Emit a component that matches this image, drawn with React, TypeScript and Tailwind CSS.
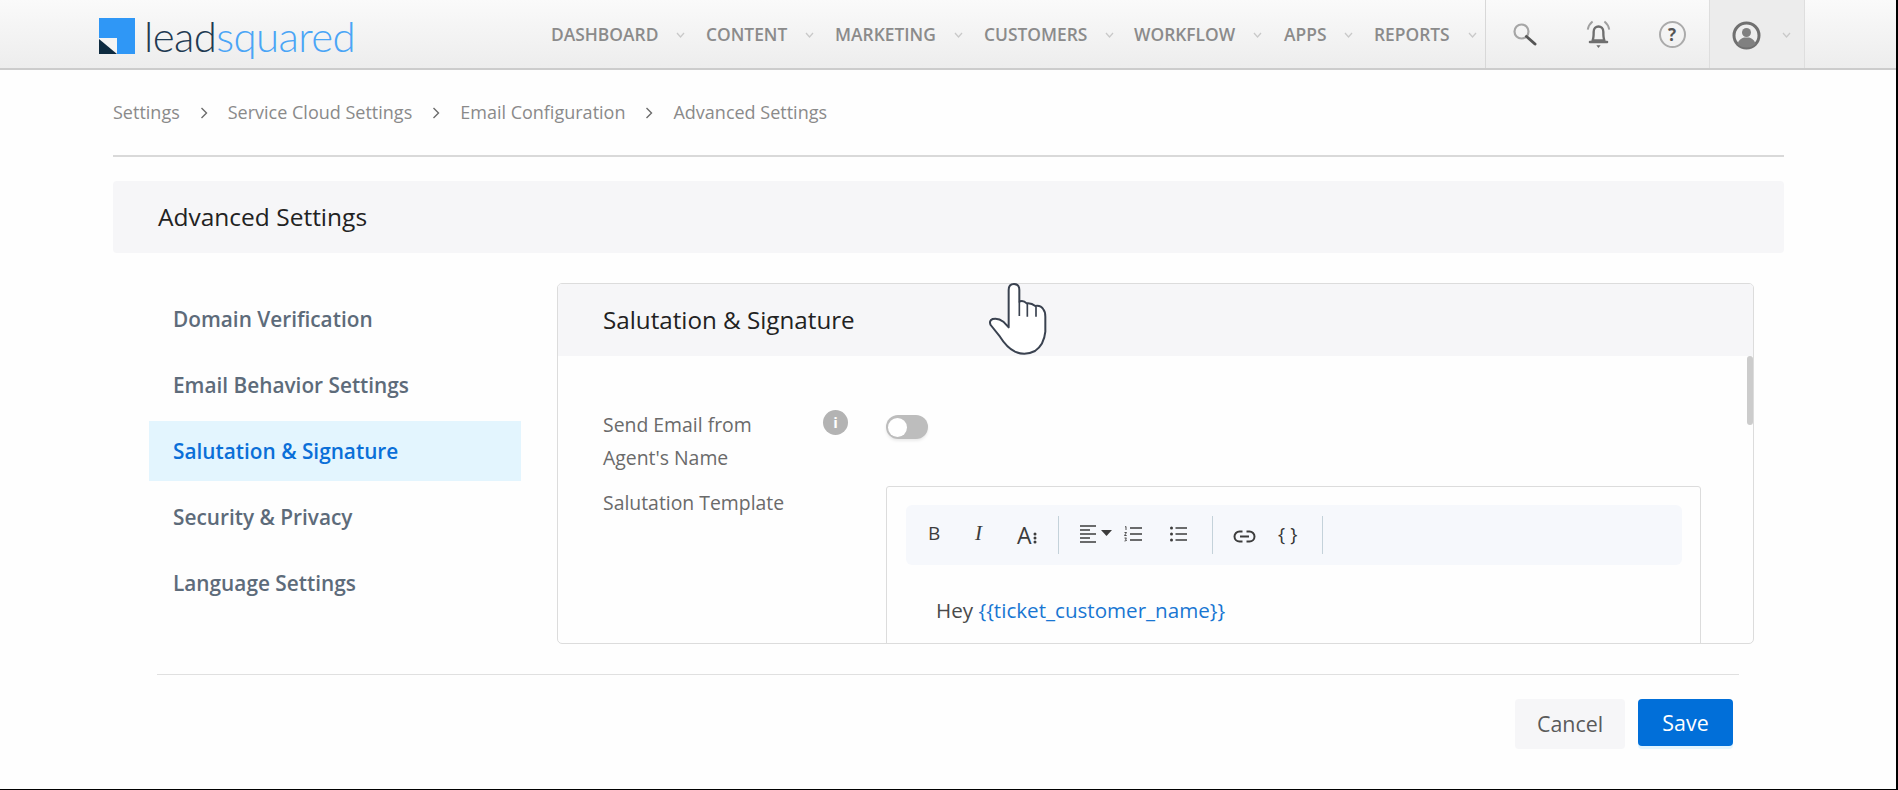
import React from 'react'

const navItems = [
  { label: 'DASHBOARD', width: 'w-[155px]' },
  { label: 'CONTENT', width: 'w-[129px]' },
  { label: 'MARKETING', width: 'w-[149px]' },
  { label: 'CUSTOMERS', width: 'w-[150px]' },
  { label: 'WORKFLOW', width: 'w-[150px]' },
  { label: 'APPS', width: 'w-[90px]' },
  { label: 'REPORTS', width: 'w-[111px]' },
]

const crumbs = ['Service Cloud Settings', 'Email Configuration', 'Advanced Settings']

const sideItems = ['Domain Verification', 'Email Behavior Settings', 'Salutation & Signature', 'Security & Privacy', 'Language Settings']

function Chevron({ className = '' }: { className?: string }) {
  return (
    <svg width="9" height="6" viewBox="0 0 9 6" fill="none" className={className}>
      <path d="M1 1l3.5 4L8 1" stroke="#c9c9c9" strokeWidth="1.3" />
    </svg>
  )
}

function CrumbArrow() {
  return (
    <svg width="8" height="12" viewBox="0 0 8 12" fill="none" className="mx-[20px]">
      <path d="M1.5 1l5 5-5 5" stroke="#6b6b6b" strokeWidth="1.4" />
    </svg>
  )
}

function Logo() {
  return (
    <div className="mt-[3px] ml-[99px] flex w-[452px] shrink-0 items-center">
      <svg width="36" height="36" viewBox="0 0 36 36">
        <rect width="36" height="36" fill="#2f97f6" />
        <rect y="20" width="18" height="16" fill="#f4f4f4" />
        <polygon points="0,21 18,36 0,36" fill="#0e2b40" />
      </svg>
      <div className="ml-[9px] text-[42px] leading-none font-light tracking-[-0.6px] font-['Lato',sans-serif]">
        <span className="text-[#1f3a52]">lead</span>
        <span className="text-[#4aa5f6]">squared</span>
      </div>
    </div>
  )
}

function HeaderIcons() {
  return (
    <div className="flex h-full items-center border-l border-[#d8d8d8]">
      <div className="flex w-[76px] justify-center">
        <svg width="25" height="25" viewBox="0 0 25 25" fill="none">
          <circle cx="9.5" cy="9.5" r="7" stroke="#a6a6a6" strokeWidth="2.2" />
          <path d="M14.5 14.5L23 22" stroke="#555" strokeWidth="3" strokeLinecap="round" />
        </svg>
      </div>
      <div className="flex w-[73px] justify-center">
        <svg width="27" height="29" viewBox="0 0 25 27" fill="none">
          <path d="M7 19c1-2 1-4 1-8 0-3 2-5 4.500-5s4.500 2 4.500 5c0 4 0 6 1 8z" stroke="#6f6f6f" strokeWidth="2.2" strokeLinejoin="round" />
          <path d="M4.500 20.500h16" stroke="#6f6f6f" strokeWidth="2.2" strokeLinecap="round" />
          <path d="M10.500 23.500h4l-2 2.500z" fill="#6f6f6f" />
          <path d="M7 1.500C4.500 3.500 3 6 2.500 9M18 1.500c2.500 2 4 4.500 4.500 7.500" stroke="#a0a0a0" strokeWidth="1.8" />
        </svg>
      </div>
      <div className="flex w-[74px] justify-center">
        <div className="flex h-[27px] w-[27px] items-center justify-center rounded-full border-2 border-[#ababab] text-[17px] leading-none font-bold text-[#555]">?</div>
      </div>
      <div className="flex h-full w-[96px] items-center border-x border-[#dedede] bg-[#ececec] pl-[22px]">
        <svg width="29" height="29" viewBox="0 0 29 29" fill="none" className="mt-[2px]">
          <circle cx="14.500" cy="14.500" r="12.500" fill="#eeeeee" stroke="#707070" strokeWidth="3" />
          <circle cx="14.500" cy="11.500" r="4.500" fill="#808080" />
          <path d="M5.500 23c1-4 4-6 6.500-6.500h5c2.500.5 5.500 2.500 6.500 6.500-2.500 2.500-5.500 3.500-9 3.500s-6.500-1-9-3.500z" fill="#808080" />
        </svg>
        <Chevron className="mt-[2px] ml-[21px]" />
      </div>
    </div>
  )
}

function Toolbar() {
  return (
    <div className="mt-[18px] mr-[18px] ml-[19px] flex h-[60px] items-center rounded-[6px] bg-[#f6f8fc] text-[#3c3c3c]">
      <span className="-mt-[3px] ml-[22px] w-[12px] text-[19px] leading-none font-medium">B</span>
      <span className="-mt-[3px] ml-[35px] w-[10px] text-[21px] leading-none italic font-['Liberation_Serif',serif]">I</span>
      <div className="ml-[32px] flex w-[20px] items-end">
        <span className="text-[23px] leading-none font-medium">A</span>
        <svg width="4" height="12" viewBox="0 0 4 12" className="mb-[3px] ml-[1px] shrink-0">
          <circle cx="2" cy="2" r="1.500" fill="#3c3c3c" />
          <circle cx="2" cy="6" r="1.500" fill="#3c3c3c" />
          <circle cx="2" cy="10" r="1.500" fill="#3c3c3c" />
        </svg>
      </div>
      <div className="ml-[21px] h-[38px] w-px bg-[#c4d2da]" />
      <svg width="32" height="18" viewBox="0 0 32 18" className="-mt-[2px] ml-[21px]" fill="none">
        <path d="M0 1h16M0 5h10M0 9h16M0 13h10M0 17h16" stroke="#3c3c3c" strokeWidth="1.400" />
        <path d="M21 5h11l-5.500 6z" fill="#3c3c3c" />
      </svg>
      <svg width="18" height="16" viewBox="0 0 18 16" className="-mt-[2px] ml-[12px]" fill="none">
        <path d="M6 2h12M6 8h12M6 14h12" stroke="#3c3c3c" strokeWidth="1.400" />
        <path d="M1 1l1-.5V4M0.500 6.500h2L.5 9.500h2.200M.5 12h2l-1 1 1 1.500-2 .5" stroke="#3c3c3c" strokeWidth=".9" />
      </svg>
      <svg width="17" height="16" viewBox="0 0 17 16" className="-mt-[2px] ml-[28px]" fill="none">
        <path d="M5.500 2h11.500M5.500 8h11.500M5.500 14h11.500" stroke="#3c3c3c" strokeWidth="1.400" />
        <circle cx="1.500" cy="2" r="1.500" fill="#3c3c3c" />
        <circle cx="1.500" cy="8" r="1.500" fill="#3c3c3c" />
        <circle cx="1.500" cy="14" r="1.500" fill="#3c3c3c" />
      </svg>
      <div className="ml-[25px] h-[38px] w-px bg-[#c4d2da]" />
      <svg width="23" height="13" viewBox="0 0 23 13" className="mt-[3px] ml-[20px]" fill="none">
        <path d="M9.500 1.500H6.500a5 5 0 000 10h3M13.500 1.500h3a5 5 0 010 10h-3M7 6.500h9" stroke="#3c3c3c" strokeWidth="2" />
      </svg>
      <span className="-mt-[2px] ml-[22px] w-[19px] text-[19px] leading-none tracking-[5px] whitespace-nowrap text-[#333]">{'{}'}</span>
      <div className="ml-[25px] h-[38px] w-px bg-[#c4d2da]" />
    </div>
  )
}

function HandCursor() {
  return (
    <svg width="120" height="100" viewBox="0 0 360 300" className="absolute top-[270px] left-[960px]" fill="none">
      <path
        d="M146 60Q146 42 162 42Q178 42 178 60L178 95Q190 90 200 100Q214 98 226 108Q242 105 250 118Q256 125 256 140L256 185Q252 225 225 243Q195 258 165 245Q140 232 120 200L92 165Q86 152 98 147Q115 143 130 155L146 172Z"
        fill="#fff"
        stroke="#3a4250"
        strokeWidth="6"
        strokeLinejoin="round"
      />
      <path d="M178 95L178 138M202 102L202 140M228 110L228 140" stroke="#3a4250" strokeWidth="5" />
    </svg>
  )
}

export default function App() {
  return (
    <div className="relative box-border h-[790px] w-[1898px] overflow-hidden border-r-2 border-b border-black bg-[#fefefe] font-['Open_Sans',sans-serif]">
      <header className="box-border flex h-[70px] items-center border-b-2 border-[#cccccc] bg-gradient-to-b from-[#fafafa] to-[#ededed]">
        <Logo />
        <nav className="mt-[2px] flex w-[934px] shrink-0 items-center">
          {navItems.map(item => (
            <div key={item.label} className={`flex items-center ${item.width}`}>
              <span className="text-[17.4px] leading-none font-semibold text-[#8b8b8b]">{item.label}</span>
              <Chevron className="ml-[18px]" />
            </div>
          ))}
        </nav>
        <HeaderIcons />
      </header>

      <div className="mr-[112px] ml-[113px] flex h-[87px] items-center border-b-2 border-[#d9d9d9] text-[18px] text-[#8a8a8a]">
        <span>Settings</span>
        {crumbs.map(c => (
          <React.Fragment key={c}>
            <CrumbArrow />
            <span>{c}</span>
          </React.Fragment>
        ))}
      </div>

      <div className="mt-[24px] mr-[112px] ml-[113px] flex h-[72px] items-center rounded-[4px] bg-[#f6f6f8] pl-[45px] text-[24.5px] text-[#222]">
        Advanced Settings
      </div>

      <div className="mt-[30px] flex pl-[149px]">
        <div className="mt-[6px] flex w-[372px] flex-col gap-[6px]">
          {sideItems.map(item => (
            <div
              key={item}
              className={`flex h-[60px] items-center pt-[2px] pl-[24px] text-[20.8px] font-semibold ${item === 'Salutation & Signature' ? 'bg-[#e3f5fe] text-[#0a6fd8]' : 'text-[#5d6b7a]'}`}
            >
              {item}
            </div>
          ))}
        </div>

        <div className="relative ml-[36px] box-border h-[361px] w-[1197px] overflow-hidden rounded-[5px] border border-[#dcdcdc]">
          <div className="flex h-[72px] items-center bg-[#f6f6f8] pl-[45px] text-[24.2px] text-[#222]">Salutation &amp; Signature</div>
          <div className="absolute top-[72px] right-0 h-[69px] w-[6px] rounded-[3px] bg-[#cccccc]" />
          <div className="flex pt-[52px] pl-[45px]">
            <div className="w-[283px] text-[19.4px] leading-[33px] text-[#6a6a6a]">
              <div className="flex">
                <div className="w-[220px]">
                  Send Email from
                  <br />
                  Agent's Name
                </div>
                <div className="mt-[2px] flex h-[25px] w-[25px] items-center justify-center rounded-full bg-[#b3b3b3] text-[15px] leading-none font-bold text-white">i</div>
              </div>
              <div className="mt-[12px]">Salutation Template</div>
            </div>
            <div className="w-[815px]">
              <div className="mt-[7px] flex h-[24px] w-[42px] items-center rounded-full bg-[#bdbdbd] pl-[2px] shadow-[0_2px_3px_rgba(0,0,0,0.08)]">
                <div className="h-[19px] w-[19px] rounded-full bg-white" />
              </div>
              <div className="mt-[47px] h-[300px] rounded-[3px] border border-[#dcdcdc]">
                <Toolbar />
                <div className="mt-[30px] pl-[49px] text-[20.6px] leading-[30px] text-[#4a4a4a]">
                  Hey <span className="text-[#1976d2]">{'{{ticket_customer_name}}'}</span>
                </div>
              </div>
            </div>
          </div>
        </div>
      </div>

      <div className="mt-[30px] mr-[157px] ml-[157px] border-t border-[#e0e0e0]" />
      <div className="mt-[24px] flex justify-end gap-[13px] pr-[163px]">
        <button className="h-[50px] w-[110px] rounded-[4px] bg-[#f6f6f8] text-[21.4px] text-[#5a5a5a]">Cancel</button>
        <button className="h-[47px] w-[95px] rounded-[4px] bg-[#016fd9] pt-[2px] text-[21.4px] text-white shadow-[0_3px_0_#e3f5fe]">Save</button>
      </div>

      <HandCursor />
    </div>
  )
}
